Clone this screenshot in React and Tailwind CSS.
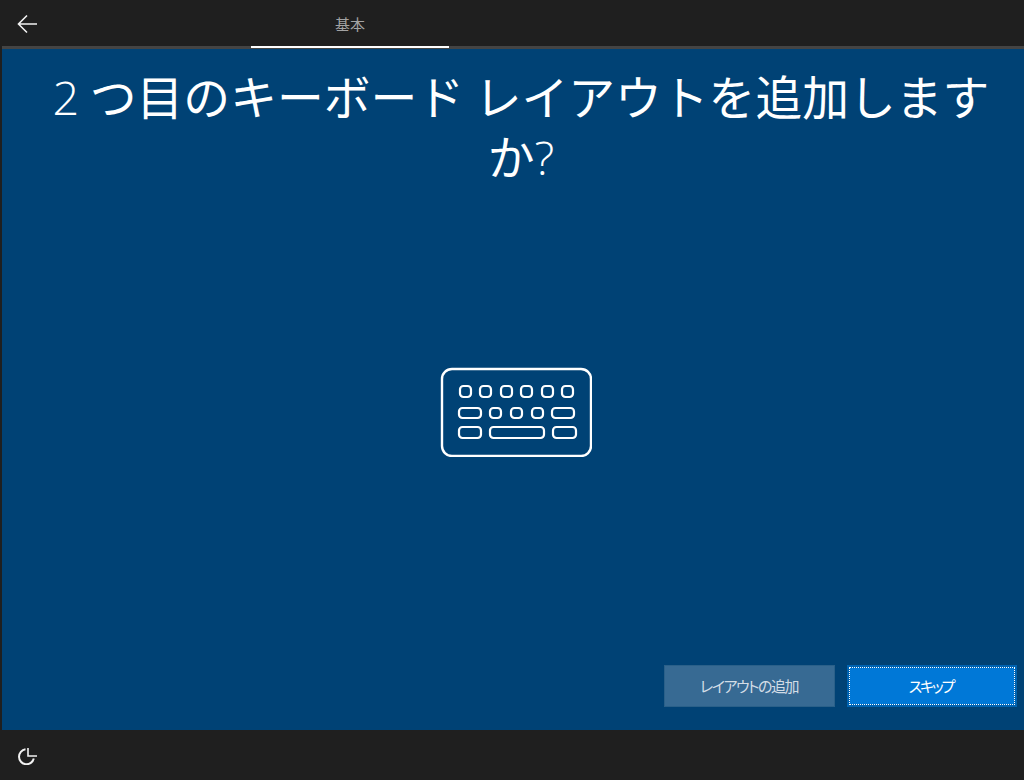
const jp = { fontFamily: '"Noto Sans CJK JP", "Noto Sans", sans-serif' };
const latin = { fontFamily: '"Open Sans", "Noto Sans", sans-serif' };

function Keyboard() {
  const r = (x, y, w, h, rx = 3.5) => <rect x={x} y={y} width={w} height={h} rx={rx} />;
  return (
    <svg width="152" height="90" viewBox="0 0 152 90" fill="none" stroke="white" strokeWidth="2.2">
      <rect x="2" y="2" width="149" height="87" rx="10" strokeWidth="2.4" />
      {[20, 40, 61, 81, 102, 122].map((x) => <g key={x}>{r(x, 19, 11, 11)}</g>)}
      {r(19, 41, 22, 10)}
      {[50, 71, 92].map((x) => <g key={x}>{r(x, 41, 11, 10)}</g>)}
      {r(112, 41, 22, 10)}
      {r(19, 60, 22, 11)}
      {r(50, 60, 54, 11)}
      {r(113, 60, 23, 11)}
    </svg>
  );
}

export default function App() {
  return (
    <div className="w-[1024px] h-[780px] flex flex-col bg-[#1f1f1f] overflow-hidden pl-[2px] pb-[2px]" style={jp}>
      <header className="h-[49px] shrink-0 flex flex-col bg-[#1f1f1f]">
        <div className="flex-1 relative flex">
          <button className="absolute left-[15px] top-[14px] text-white">
            <svg width="22" height="20" viewBox="0 0 22 20" fill="none" stroke="#f2f2f2" strokeWidth="1.6">
              <path d="M1.5 10H20M10 1.5L1.5 10L10 18.5" />
            </svg>
          </button>
          <div className="w-[198px] ml-[249px] flex items-center justify-center text-[15px] text-[#a3a3a3] pt-[3px]">基本</div>
        </div>
        <div className="h-[3px] bg-[#444444] flex">
          <div className="w-[198px] ml-[249px] h-[2px] bg-white" />
        </div>
      </header>
      <main className="flex-1 flex flex-col bg-[#004275] text-white min-h-0">
        <h1 className="mt-[17px] ml-[48px] mr-[32px] text-center text-[46.8px] leading-[57px] font-normal">
          <span className="font-light" style={latin}>2</span> つ目のキーボード レイアウトを追加します か<span className="font-light" style={latin}>?</span>
        </h1>
        <div className="flex-1 flex items-center justify-center pb-[27px] pl-[5px]">
          <Keyboard />
        </div>
        <div className="flex justify-end gap-[12px] pr-[7px] pb-[23px]">
          <button className="w-[171px] h-[42px] pr-[1px] bg-[#376a93] border border-[#2a6089] text-[15px] [font-feature-settings:'palt'] tracking-[-1.5px] text-[#d3dde6]">レイアウトの追加</button>
          <button className="w-[170px] h-[42px] pr-[2px] bg-[#0078d7] border-[3px] border-[#0063b1] outline-1 outline-dotted outline-white outline-offset-[-3px] text-[15px] [font-feature-settings:'palt'] tracking-[-2.2px] text-white">スキップ</button>
        </div>
      </main>
      <footer className="h-[48px] shrink-0 flex items-center pl-[16px] bg-[#1f1f1f]">
        <svg width="22" height="22" viewBox="0 0 22 22" fill="none" stroke="#f2f2f2" strokeWidth="2">
          <path d="M7.5 6.3A7.5 7.5 0 1 0 15.8 15.5" />
          <path d="M10 5V13H19" strokeWidth="1.6" />
        </svg>
      </footer>
    </div>
  );
}
